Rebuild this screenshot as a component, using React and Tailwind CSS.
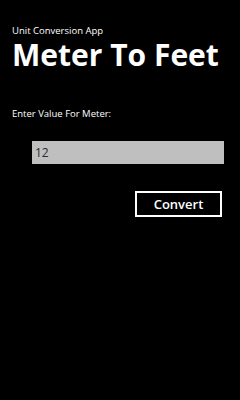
import { useState } from "react";

export default function App() {
  const [value, setValue] = useState("12");

  return (
    <div
      className="w-[240px] h-[400px] bg-black text-white overflow-hidden"
      style={{ fontFamily: '"Open Sans", "Noto Sans", sans-serif' }}
    >
      {/* Header */}
      <div className="pl-[12px] pt-[24px]">
        <div className="text-[9.5px] leading-[14px]">Unit Conversion App</div>
        <h1 className="text-[30px] leading-[34px] font-bold">Meter To Feet</h1>
      </div>

      {/* Form */}
      <div className="pl-[12px] pt-[35px] text-[9.5px] leading-[13px]">
        Enter Value For Meter:
      </div>

      <div className="pl-[32px] pr-[16px] pt-[19px]">
        <input
          value={value}
          onChange={(e) => setValue(e.target.value)}
          className="w-full h-[23px] bg-[#bfbfbf] text-[#2a2a2a] text-[12px] px-[3px] outline-none"
        />
      </div>

      <div className="flex justify-end pr-[18px] pt-[27px]">
        <button className="w-[87px] h-[26px] border-2 border-white text-[13px] font-semibold leading-none">
          Convert
        </button>
      </div>
    </div>
  );
}
